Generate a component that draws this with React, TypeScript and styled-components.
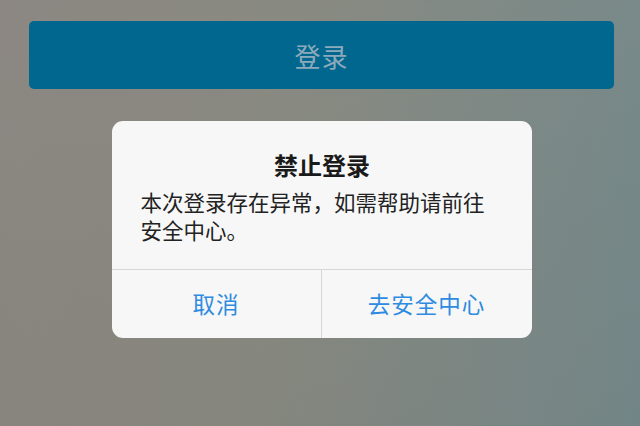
import styled, { createGlobalStyle } from "styled-components";

const Global = createGlobalStyle`
    html, body {
        margin: 0;
        padding: 0;
        height: 100%;
    }
    body {
        font-family: "Noto Sans CJK SC", "Noto Sans", sans-serif;
        background: linear-gradient(100deg, #8a8580 0%, #86887f 45%, #728789 100%);
        overflow: hidden;
    }
`;

const Screen = styled.div`
    width: 640px;
    height: 426px;
    box-sizing: border-box;
    padding: 21px 26px 0 29px;
    display: flex;
    flex-direction: column;
    align-items: center;
    background: linear-gradient(180deg, rgba(255, 255, 255, 0.02) 0%, rgba(120, 100, 90, 0.06) 100%);
`;

const LoginButton = styled.button`
    width: 100%;
    height: 68px;
    border: none;
    border-radius: 5px;
    background: #02678f;
    color: #8cabba;
    font-family: inherit;
    font-size: 26px;
    letter-spacing: 1px;
    padding: 0;
`;

const Dialog = styled.div`
    width: 420px;
    margin-top: 32px;
    background: #f7f7f7;
    border-radius: 11px;
    overflow: hidden;
    display: flex;
    flex-direction: column;
`;

const Content = styled.div`
    padding: 28px 28px 25px 29px;
    display: flex;
    flex-direction: column;
    gap: 8px;
`;

const Title = styled.div`
    text-align: center;
    font-size: 24px;
    line-height: 31px;
    font-weight: 700;
    color: #1a1a1a;
`;

const Message = styled.div`
    font-size: 21.5px;
    line-height: 28px;
    color: #222;
`;

const Actions = styled.div`
    display: grid;
    grid-template-columns: 210px 1fr;
    border-top: 1px solid #d6d6d6;
    height: 68px;
`;

const Action = styled.button<{ $divider?: boolean }>`
    border: none;
    background: transparent;
    border-right: ${p => (p.$divider ? "1px solid #d6d6d6" : "none")};
    color: #2e8be0;
    font-family: inherit;
    font-size: 22.5px;
    letter-spacing: 1px;
    padding: 0 0 2px;
`;

export default function App() {
    return (
        <>
            <Global />
            <Screen>
                <LoginButton>登录</LoginButton>
                <Dialog>
                    <Content>
                        <Title>禁止登录</Title>
                        <Message>本次登录存在异常，如需帮助请前往安全中心。</Message>
                    </Content>
                    <Actions>
                        <Action $divider>取消</Action>
                        <Action>去安全中心</Action>
                    </Actions>
                </Dialog>
            </Screen>
        </>
    );
}
